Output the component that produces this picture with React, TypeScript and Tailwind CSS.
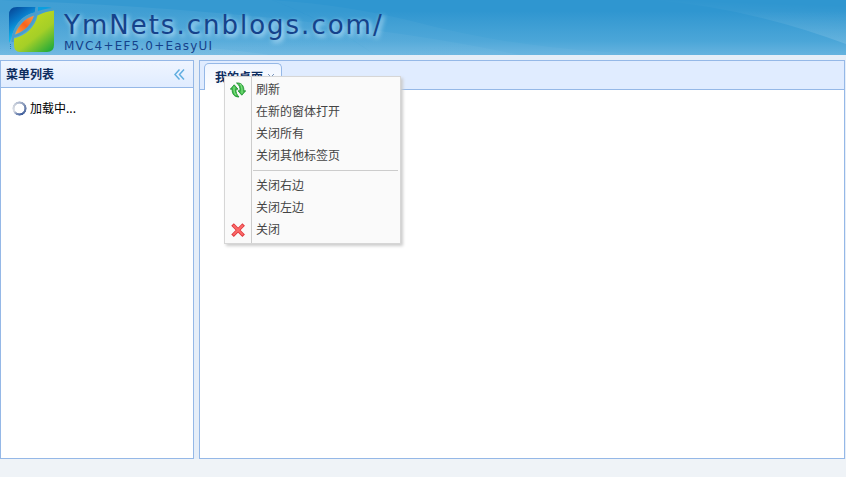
import React from "react";

const FONT = "font-['Noto_Sans_CJK_SC',sans-serif]";

function Logo() {
  return (
    <svg className="h-[46px] w-[46px]" viewBox="0 0 46 46">
      <defs>
        <linearGradient id="lb" gradientUnits="userSpaceOnUse" x1="4" y1="0" x2="18" y2="20">
          <stop offset="0" stopColor="#064a9a" />
          <stop offset="0.5" stopColor="#0879c8" />
          <stop offset="1" stopColor="#0bb5ec" />
        </linearGradient>
        <linearGradient id="lg" x1="0.3" y1="0.1" x2="1" y2="1">
          <stop offset="0" stopColor="#c2da22" />
          <stop offset="0.5" stopColor="#a5cf27" />
          <stop offset="1" stopColor="#0fa53c" />
        </linearGradient>
        <linearGradient id="lo" x1="0" y1="1" x2="1" y2="0">
          <stop offset="0" stopColor="#f9a840" />
          <stop offset="0.5" stopColor="#f9621c" />
          <stop offset="1" stopColor="#f99a48" />
        </linearGradient>
      </defs>
      <path d="M8 0H26.500V5C14 8 5 18 2.500 31L0 36V8Q0 0 8 0Z" fill="url(#lb)" />
      <path d="M29 0H38Q42 0 43.500 1.500Q36 2 29 5Z" fill="#0a9fe0" />
      <path d="M28.500 8.500Q36 4.500 45 3.500V38Q45 45 38 45H11Q5 45 5 38V31.500C17 28.500 26 20 28.500 8.500Z" fill="url(#lg)" />
      <path d="M6 27.500C9 19 16 11 25.500 8.500C23 17 16 24 6 27.500Z" fill="url(#lo)" />
      <path d="M4 29.500C17 26.500 26.500 16 27.500 0.500M3.500 35C4 20 13 9 26 6.500Q34 2.800 44 2.200" fill="none" stroke="#4a9dcb" strokeWidth="2.200" />
      <path d="M1.500 37v5" stroke="#2381bd" strokeDasharray="1 1" />
    </svg>
  );
}

function HeaderWaves() {
  return (
    <svg className="absolute inset-0 h-[55px] w-[846px]" viewBox="0 0 846 55">
      <defs>
        <linearGradient id="w1" x1="0" x2="1">
          <stop offset="0" stopColor="#fff" stopOpacity="0.060" />
          <stop offset="1" stopColor="#fff" stopOpacity="0.030" />
        </linearGradient>
        <linearGradient id="w2" x1="0" y1="1" x2="0.150" y2="0">
          <stop offset="0" stopColor="#fff" stopOpacity="0.170" />
          <stop offset="1" stopColor="#fff" stopOpacity="0" />
        </linearGradient>
      </defs>
      <path d="M0 0Q160 6 290 20T520 55H0Z" fill="url(#w1)" />
      <path d="M272 0Q330 22 375 55H700Q540 55 420 23Q350 5 272 0Z" fill="#fff" fillOpacity="0.030" />
      <path d="M272 0Q325 20 375 55H0V0Z" fill="#fff" fillOpacity="0.030" />
      <path d="M190 46Q235 50 270 55H190Z" fill="#fff" fillOpacity="0.060" />
      <path d="M653 0Q750 8 846 44V0Z" fill="url(#w2)" />
    </svg>
  );
}

function RefreshIcon() {
  return (
    <svg className="h-4 w-4" viewBox="0 0 16 16">
      <g fill="#42bd4c" stroke="#168b28" strokeWidth="0.800" strokeLinejoin="round">
        <path d="M0.300 7.200L4.200 2.800L8 7.200H6C5.800 10.500 6.700 12.500 9 15C4 15 1.800 11.500 2.200 7.200Z" />
        <path d="M15.700 8.800L11.800 13.200L8 8.800H10C10.200 5.500 9.300 3 6.500 1C12 0.500 14.200 4.500 13.800 8.800Z" />
      </g>
      <path d="M4 4.500V8Q4 11 6 13M12 11.500V7Q12 4 10 2" fill="none" stroke="#8de58c" strokeWidth="1" />
    </svg>
  );
}

function DeleteIcon() {
  return (
    <svg className="h-4 w-4" viewBox="0 0 16 16">
      <path d="M3.800 3.800L12.400 12.400M12.400 3.800L3.800 12.400" stroke="#e0393f" strokeWidth="3.600" strokeLinecap="square" />
      <path d="M3.800 3.800L12.400 12.400M12.400 3.800L3.800 12.400" stroke="#fb6a68" strokeWidth="2" strokeLinecap="round" />
    </svg>
  );
}

function MenuItem({ label, icon }: { label: string; icon?: React.ReactNode }) {
  return (
    <div className="flex h-[22px] items-center text-[12px] text-[#444]">
      <span className="flex w-[26px] justify-center">{icon}</span>
      <span className="pb-[2px] pl-[5px] leading-[20px]">{label}</span>
    </div>
  );
}

function ContextMenu() {
  return (
    <div className="absolute left-[224px] top-[76px] h-[168px] w-[177px] border border-[#d6d6d6] bg-[#fafafa] py-[2px] shadow-[2px_2px_3px_#ccc]">
      <div className="absolute inset-y-0 left-[26px] w-px bg-[#ccc]" />
      <MenuItem label="刷新" icon={<RefreshIcon />} />
      <MenuItem label="在新的窗体打开" />
      <MenuItem label="关闭所有" />
      <MenuItem label="关闭其他标签页" />
      <div className="mb-[4px] ml-[28px] mr-[2px] mt-[3px] h-px bg-[#ccc]" />
      <MenuItem label="关闭右边" />
      <MenuItem label="关闭左边" />
      <MenuItem label="关闭" icon={<DeleteIcon />} />
    </div>
  );
}

export default function App() {
  return (
    <div className={`relative flex h-[477px] w-[846px] flex-col overflow-hidden bg-[#eff3f7] text-[12px] ${FONT}`}>
      <header className="relative flex h-[55px] shrink-0 overflow-hidden bg-linear-to-b from-[#2f96d0] from-20% via-[#4ba6d8] via-75% to-[#66b3df] pl-[9px] pt-[7px]">
        <HeaderWaves />
        <div className="relative flex gap-[9px]">
          <Logo />
          <div className="whitespace-nowrap font-['DejaVu_Sans',sans-serif] text-[#15428b]">
            <div className="h-[32px] text-[26px] leading-[36px] tracking-[2px] [text-shadow:2px_2px_5px_#d5efff]">YmNets.cnblogs.com/</div>
            <div className="text-[12px] leading-[15px] tracking-[1.2px]">MVC4+EF5.0+EasyUI</div>
          </div>
        </div>
      </header>
      <main className="flex h-[404px] shrink-0 gap-[5px] bg-[#e6eef8] pr-px pt-[5px]">
        <aside className="w-[194px] border border-[#95b8e7] bg-white">
          <div className="flex h-[27px] items-center justify-between border-b border-[#95b8e7] bg-linear-to-b from-[#eff5ff] to-[#e0ecff] pl-[5px] pr-[8px]">
            <span className="font-bold leading-[26px] text-[#0e2d5f]">菜单列表</span>
            <svg className="h-[11px] w-[11px]" viewBox="0 0 11 11" fill="none" stroke="#60aee0" strokeWidth="1.500">
              <path d="M5.500 0.500L1 5.500L5.500 10.500M10 0.500L5.500 5.500L10 10.500" />
            </svg>
          </div>
          <div className="flex items-center gap-[3px] pl-[11px] pt-[11px] leading-[18px] text-black">
            <div className="h-[15px] w-[15px] rounded-full bg-[conic-gradient(#aeb9cf,#7185ad_20%,#405f9e_45%,#7b8eb5_58%,#dcdfe6_68%,#c9cfda_85%,#aeb9cf)] [mask:radial-gradient(circle,transparent_4.5px,black_5.2px,black_6.8px,transparent_7.4px)]" />
            <span>加载中...</span>
          </div>
        </aside>
        <section className="flex-1 border border-[#95b8e7] bg-white">
          <div className="flex h-[29px] items-end border-b border-[#95b8e7] bg-[#e0ecff] pl-[4px]">
            <div className="-mb-px flex h-[27px] w-[78px] rounded-t-[5px] border border-b-0 border-[#95b8e7] bg-linear-to-b from-[#eff5ff] to-white pl-[10px] font-bold leading-[25px] text-[#0e2d5f]">
              我的桌面
              <svg className="ml-[5px] mt-[10px] h-[6px] w-[6px]" viewBox="0 0 6 6" stroke="#7895bd" fill="none">
                <path d="M0 0L6 6M6 0L0 6" />
              </svg>
            </div>
          </div>
        </section>
      </main>
      <ContextMenu />
    </div>
  );
}
